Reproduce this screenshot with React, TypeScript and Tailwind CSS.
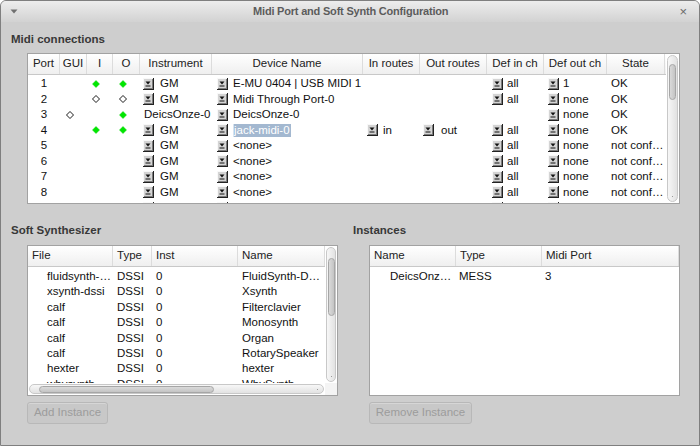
import React from 'react';

const COLS =
  'grid grid-cols-[32px_27px_26px_27px_72px_151px_57px_67px_57px_63px_58px]';

function Arrow() {
  return (
    <svg width="11" height="12" viewBox="0 0 11 12" className="shrink-0">
      <rect x="0" y="0" width="11" height="12" fill="#d4d4d4" />
      <rect x="0" y="0" width="10" height="1" fill="#f8f8f8" />
      <rect x="0" y="0" width="1" height="11" fill="#f8f8f8" />
      <rect x="10" y="0" width="1" height="12" fill="#222" />
      <rect x="0" y="11" width="11" height="1" fill="#222" />
      <rect x="9" y="1" width="1" height="10" fill="#7c7c7c" />
      <rect x="1" y="10" width="9" height="1" fill="#7c7c7c" />
      <polygon points="2.5,3.5 7.5,3.5 5,6.5" fill="#111" />
      <rect x="2.5" y="7.5" width="5" height="1" fill="#111" />
    </svg>
  );
}

function Dot({ kind }: { kind?: string }) {
  if (!kind) return null;
  const green = kind === 'g';
  return (
    <svg width="8" height="8" viewBox="0 0 8 8">
      <polygon
        points="4,0.5 7.5,4 4,7.5 0.5,4"
        fill={green ? '#00e600' : '#ffffff'}
        stroke={green ? '#00d400' : '#000000'}
        strokeWidth={green ? 0.5 : 0.9}
      />
    </svg>
  );
}

type Port = {
  port: string;
  gui?: string;
  i?: string;
  o?: string;
  inst: string;
  instBtn: boolean;
  dev: string;
  sel?: boolean;
  inR?: string;
  outR?: string;
  defIn?: string;
  defOut: string;
  state: string;
};

const ports: Port[] = [
  { port: '1', i: 'g', o: 'g', inst: 'GM', instBtn: true, dev: 'E-MU 0404 | USB MIDI 1', defIn: 'all', defOut: '1', state: 'OK' },
  { port: '2', i: 'h', o: 'h', inst: 'GM', instBtn: true, dev: 'Midi Through Port-0', defIn: 'all', defOut: 'none', state: 'OK' },
  { port: '3', gui: 'h', o: 'g', inst: 'DeicsOnze-0', instBtn: false, dev: 'DeicsOnze-0', defOut: 'none', state: 'OK' },
  { port: '4', i: 'g', o: 'g', inst: 'GM', instBtn: true, dev: 'jack-midi-0', sel: true, inR: 'in', outR: 'out', defIn: 'all', defOut: 'none', state: 'OK' },
  { port: '5', inst: 'GM', instBtn: true, dev: '<none>', defIn: 'all', defOut: 'none', state: 'not conf…' },
  { port: '6', inst: 'GM', instBtn: true, dev: '<none>', defIn: 'all', defOut: 'none', state: 'not conf…' },
  { port: '7', inst: 'GM', instBtn: true, dev: '<none>', defIn: 'all', defOut: 'none', state: 'not conf…' },
  { port: '8', inst: 'GM', instBtn: true, dev: '<none>', defIn: 'all', defOut: 'none', state: 'not conf…' },
  { port: '9', inst: 'GM', instBtn: true, dev: '<none>', defIn: 'all', defOut: 'none', state: 'not conf…' },
];

const headers = ['Port', 'GUI', 'I', 'O', 'Instrument', 'Device Name', 'In routes', 'Out routes', 'Def in ch', 'Def out ch', 'State'];

const synths = [
  ['fluidsynth-…', 'DSSI', '0', 'FluidSynth-D…'],
  ['xsynth-dssi', 'DSSI', '0', 'Xsynth'],
  ['calf', 'DSSI', '0', 'Filterclavier'],
  ['calf', 'DSSI', '0', 'Monosynth'],
  ['calf', 'DSSI', '0', 'Organ'],
  ['calf', 'DSSI', '0', 'RotarySpeaker'],
  ['hexter', 'DSSI', '0', 'hexter'],
  ['whysynth', 'DSSI', '0', 'WhySynth'],
];

function VScroll({ thumbTop, thumbH }: { thumbTop: string; thumbH: string }) {
  return (
    <div className="h-full w-full px-[1px] py-[1px]">
      <div className="h-full w-full rounded-full border border-[#c8c8c8] bg-gradient-to-r from-[#f7f7f7] to-[#e2e2e2] flex flex-col items-center">
        <div className={`${thumbTop} ${thumbH} w-[7px] rounded-full border border-[#a6a6a6] bg-gradient-to-r from-[#dadada] to-[#c4c4c4]`} />
        <div className="flex-1" />
        <div className="mb-[4px] h-[1px] w-[1px] bg-[#9a9a9a]" />
      </div>
    </div>
  );
}

function DisabledButton({ label, w }: { label: string; w: string }) {
  return (
    <div
      className={`${w} h-[22px] rounded-[3px] border border-[#b8b8b8] bg-[#c8c8c8] shadow-[inset_0_1px_0_#d6d6d6] flex items-center justify-center text-[11.5px] text-[#9c9c9c]`}
    >
      {label}
    </div>
  );
}

export default function App() {
  return (
    <div className="w-[700px] h-[446px] overflow-hidden bg-[#cecece] border border-[#7f7f7f] rounded-t-[6px] font-['Liberation_Sans',Arial,sans-serif] text-[11.5px] text-[#111]">
      {/* title bar */}
      <div className="h-[21px] flex items-center bg-gradient-to-b from-[#ededed] to-[#d2d2d2] px-[9px]">
        <svg width="8" height="5" viewBox="0 0 8 5" className="shrink-0">
          <polygon points="0.5,0.5 7.5,0.5 4,4.5" fill="#707070" />
        </svg>
        <div className="flex-1 text-center font-bold text-[11px] tracking-[-0.2px] text-[#5c5c5c] pl-[4px]">
          Midi Port and Soft Synth Configuration
        </div>
        <span className="text-[13px] leading-none text-[#6a6a6a] pr-[3px]">×</span>
      </div>

      <div className="pl-[10px]">
        <div className="mt-[10px] h-[14px] leading-[14px] font-bold text-[#383838]">Midi connections</div>

        {/* midi connections table */}
        <div className="mt-[7px] ml-[16px] w-[653px] h-[151px] border border-[#a2a2a2] bg-white flex">
          <div className="w-[638px] h-full overflow-hidden">
            <div className={`${COLS} h-[21px] border-b border-[#c8c8c8] bg-gradient-to-b from-white to-[#efefef] text-[#222]`}>
              {headers.map((h) => (
                <div key={h} className="flex items-center justify-center border-r border-[#dcdcdc] whitespace-nowrap">
                  {h}
                </div>
              ))}
            </div>
            {ports.map((r) => (
              <div key={r.port} className={`${COLS} h-[15.5px] items-center whitespace-nowrap`}>
                <div className="text-center">{r.port}</div>
                <div className="pl-[6px] flex"><Dot kind={r.gui} /></div>
                <div className="pl-[5px] flex"><Dot kind={r.i} /></div>
                <div className="pl-[6px] flex"><Dot kind={r.o} /></div>
                <div className={`${r.instBtn ? 'pl-[3px]' : 'pl-[4px]'} flex items-center gap-[6px] overflow-hidden`}>
                  {r.instBtn && <Arrow />}
                  <span>{r.inst}</span>
                </div>
                <div className="pl-[5px] flex items-center gap-[5px] overflow-hidden">
                  <Arrow />
                  {r.sel ? (
                    <span className="bg-[#a3b8d0] text-white leading-[13px] pr-[1px] border-l border-[#d8e2ee]">{r.dev}</span>
                  ) : (
                    <span>{r.dev}</span>
                  )}
                </div>
                <div className="pl-[4px] flex items-center gap-[5px]">
                  {r.inR && <Arrow />}
                  {r.inR && <span>{r.inR}</span>}
                </div>
                <div className="pl-[3px] flex items-center gap-[7px]">
                  {r.outR && <Arrow />}
                  {r.outR && <span>{r.outR}</span>}
                </div>
                <div className="pl-[5px] flex items-center gap-[4px]">
                  {r.defIn && <Arrow />}
                  {r.defIn && <span>{r.defIn}</span>}
                </div>
                <div className="pl-[4px] flex items-center gap-[4px]">
                  <Arrow />
                  <span>{r.defOut}</span>
                </div>
                <div className="pl-[4px] overflow-hidden">{r.state}</div>
              </div>
            ))}
          </div>
          <div className="w-[13px] h-full">
            <VScroll thumbTop="mt-[8px]" thumbH="h-[36px]" />
          </div>
        </div>

        {/* bottom panels */}
        <div className="mt-[19px] grid grid-cols-[327px_327px] gap-[15px]">
          <div>
            <div className="h-[14px] leading-[14px] font-bold text-[#383838]">Soft Synthesizer</div>
            <div className="mt-[8px] ml-[16px] w-[311px] h-[151px] border border-[#a2a2a2] bg-white flex flex-col">
              <div className="h-[137px] flex">
                <div className="w-[297px] h-full overflow-hidden">
                  <div className="grid grid-cols-[85px_39px_86px_87px] h-[21px] border-b border-[#c8c8c8] bg-gradient-to-b from-white to-[#efefef] text-[#222]">
                    {['File', 'Type', 'Inst', 'Name'].map((h) => (
                      <div key={h} className="pl-[4px] flex items-center border-r border-[#dcdcdc]">{h}</div>
                    ))}
                  </div>
                  <div className="pt-[1px]">
                    {synths.map((s, idx) => (
                      <div key={idx} className="grid grid-cols-[85px_39px_86px_87px] h-[15.4px] items-center whitespace-nowrap">
                        <div className="pl-[19px] overflow-hidden">{s[0]}</div>
                        <div className="pl-[4px]">{s[1]}</div>
                        <div className="pl-[4px]">{s[2]}</div>
                        <div className="pl-[4px] overflow-hidden">{s[3]}</div>
                      </div>
                    ))}
                  </div>
                </div>
                <div className="w-[12px] h-full">
                  <VScroll thumbTop="mt-[10px]" thumbH="h-[58px]" />
                </div>
              </div>
              <div className="h-[12px] flex">
                <div className="w-[297px] h-full px-[1px] py-[1px]">
                  <div className="h-full w-full rounded-full border border-[#c8c8c8] bg-gradient-to-b from-[#f7f7f7] to-[#e2e2e2] flex items-center pl-[9px]">
                    <div className="w-[175px] h-[7px] rounded-full border border-[#a6a6a6] bg-gradient-to-b from-[#dadada] to-[#c4c4c4]" />
                    <div className="flex-1" />
                    <div className="mr-[5px] h-[1px] w-[1px] bg-[#9a9a9a]" />
                  </div>
                </div>
                <div className="w-[12px] h-full bg-[#f4f4f4]" />
              </div>
            </div>
            <div className="mt-[6px] ml-[16px]">
              <DisabledButton label="Add Instance" w="w-[81px]" />
            </div>
          </div>

          <div>
            <div className="h-[14px] leading-[14px] font-bold text-[#383838]">Instances</div>
            <div className="mt-[8px] ml-[16px] w-[311px] h-[151px] border border-[#a2a2a2] bg-white overflow-hidden">
              <div className="grid grid-cols-[86px_86px_137px] h-[21px] border-b border-[#c8c8c8] bg-gradient-to-b from-white to-[#efefef] text-[#222]">
                {['Name', 'Type', 'Midi Port'].map((h) => (
                  <div key={h} className="pl-[4px] flex items-center border-r border-[#dcdcdc]">{h}</div>
                ))}
              </div>
              <div className="pt-[1px] grid grid-cols-[86px_86px_137px] h-[16.5px] items-center whitespace-nowrap">
                <div className="pl-[20px] overflow-hidden">DeicsOnz…</div>
                <div className="pl-[3px]">MESS</div>
                <div className="pl-[3px]">3</div>
              </div>
            </div>
            <div className="mt-[6px] ml-[16px]">
              <DisabledButton label="Remove Instance" w="w-[103px]" />
            </div>
          </div>
        </div>
      </div>
    </div>
  );
}
